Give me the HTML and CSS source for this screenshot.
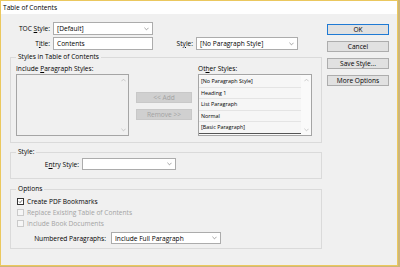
FILE: index.html
```html
<!DOCTYPE html>
<html lang="en">
<head>
  <meta charset="UTF-8">
  <title>Table of Contents</title>
  <link rel="stylesheet" href="styles.css">
</head>
<body>
<div class="window">
  <div class="titlebar">Table of Contents</div>
  <div class="dialog">
    <div class="main">
      <div class="row">
        <span class="lbl">TOC <u>S</u>tyle:</span>
        <div class="select w-toc"><span>[Default]</span>
          <svg class="chev" viewBox="0 0 6 4"><path d="M0.5 0.5 L3 3 L5.5 0.5"/></svg></div>
      </div>
      <div class="row">
        <span class="lbl">T<u>i</u>tle:</span>
        <div class="input w-toc">Contents</div>
        <span class="lbl">St<u>y</u>le:</span>
        <div class="select w-style"><span>[No Paragraph Style]</span>
          <svg class="chev" viewBox="0 0 6 4"><path d="M0.5 0.5 L3 3 L5.5 0.5"/></svg></div>
      </div>

      <fieldset class="group g-styles">
        <legend>Styles in Table of Contents</legend>
        <div class="lists">
          <span class="cap">Include <u>P</u>aragraph Styles:</span>
          <span></span>
          <span class="cap">Ot<u>h</u>er Styles:</span>

          <div class="listbox empty">
            <div class="items"></div>
            <div class="scroll">
              <svg viewBox="0 0 6 4"><path d="M0.5 3.5 L3 1 L5.5 3.5"/></svg>
              <svg viewBox="0 0 6 4"><path d="M0.5 0.5 L3 3 L5.5 0.5"/></svg>
            </div>
          </div>
          <div class="movers">
            <div class="btn disabled">&lt;&lt; Add</div>
            <div class="btn disabled">Remove &gt;&gt;</div>
          </div>
          <div class="listbox">
            <div class="items">
              <div class="item">[No Paragraph Style]</div>
              <div class="item">Heading 1</div>
              <div class="item">List Paragraph</div>
              <div class="item">Normal</div>
              <div class="item last">[Basic Paragraph]</div>
            </div>
            <div class="scroll">
              <svg viewBox="0 0 6 4"><path d="M0.5 3.5 L3 1 L5.5 3.5"/></svg>
              <svg viewBox="0 0 6 4"><path d="M0.5 0.5 L3 3 L5.5 0.5"/></svg>
            </div>
          </div>
        </div>
      </fieldset>

      <fieldset class="group g-style">
        <legend>Style:</legend>
        <div class="row">
          <span class="lbl wide">E<u>n</u>try Style:</span>
          <div class="select w-entry"><span></span>
            <svg class="chev" viewBox="0 0 6 4"><path d="M0.5 0.5 L3 3 L5.5 0.5"/></svg></div>
        </div>
      </fieldset>

      <fieldset class="group g-options">
        <legend>Options</legend>
        <div class="check"><span class="box"><svg viewBox="0 0 8 8"><path d="M1.5 4 L3.3 5.8 L6.6 1.8"/></svg></span>Create PDF Bookmarks</div>
        <div class="check off"><span class="box"></span>Replace Existing Table of Contents</div>
        <div class="check off"><span class="box"></span>Include Book Documents</div>
        <div class="row num">
          <span class="lbl numlbl">Numbered Paragraphs:</span>
          <div class="select w-num"><span>Include Full Paragraph</span>
            <svg class="chev" viewBox="0 0 6 4"><path d="M0.5 0.5 L3 3 L5.5 0.5"/></svg></div>
        </div>
      </fieldset>
    </div>

    <div class="side">
      <div class="btn default">OK</div>
      <div class="btn">Cancel</div>
      <div class="btn">Save Style...</div>
      <div class="btn">More Options</div>
    </div>
  </div>
</div>
</body>
</html>
```

FILE: styles.css
```css
body {
  margin: 0;
  background: #cdb67a;
  font-family: "Open Sans", sans-serif;
  font-size: 6.6px;
  color: #000;
}
.window {
  width: 398px;
  height: 266px;
  box-sizing: border-box;
  border: 1px solid #ebc85e;
  background: #f0f0f0;
  display: flex;
  flex-direction: column;
}
.titlebar {
  flex: none;
  height: 13px;
  line-height: 13px;
  padding-left: 2px;
  background: #fff;
}
.dialog {
  flex: 1;
  display: flex;
}
.main {
  width: 321px;
  padding: 8px 0 0 9px;
  box-sizing: border-box;
}
.row {
  display: flex;
  align-items: center;
  height: 13px;
}
.row + .row {
  margin-top: 2px;
}
.lbl {
  width: 43px;
  padding-right: 3px;
  box-sizing: border-box;
  text-align: right;
  white-space: nowrap;
}
u {
  text-underline-offset: 1px;
}

/* eingabefelder */
.select, .input {
  height: 13px;
  box-sizing: border-box;
  border: 1px solid #acacac;
  background: #fff;
  display: flex;
  align-items: center;
  justify-content: space-between;
  padding: 0 3px 0 3px;
  white-space: nowrap;
}
.chev {
  width: 5px;
  height: 4px;
  flex: none;
}
.chev path, .scroll path {
  fill: none;
  stroke: #777;
  stroke-width: 0.8;
}
.w-toc { width: 100px; }
.w-style { width: 102px; }
.w-entry { width: 94px; height: 12px; }
.w-num { width: 110px; height: 12px; }

/* gruppen */
.group {
  width: 312px;
  box-sizing: border-box;
  min-width: 0;
  margin: 2px 0 0 0;
  padding: 0 9px 6px 5px;
  border: 1px solid #dadada;
}
.group legend {
  padding: 0 2px;
  line-height: 10px;
}
.g-style {
  margin-top: 4px;
  padding-bottom: 8px;
}
.g-style .row {
  margin-top: 1px;
  height: 12px;
}
.lbl.wide {
  width: 66px;
}
.g-options {
  margin-top: 5px;
  padding-bottom: 4px;
}

.lists {
  margin-top: 2px;
  display: grid;
  grid-template-columns: 113px 69px 114px;
  grid-template-rows: 9px 62px;
  row-gap: 1px;
}
.cap {
  line-height: 9px;
  white-space: nowrap;
}
.listbox {
  display: flex;
  border: 1px solid #a5a5a5;
  background: #fafafa;
}
.listbox.empty {
  background: #f0f0f0;
}
.items {
  flex: 1;
  padding-top: 1px;
}
.item {
  height: 10.5px;
  line-height: 10.5px;
  font-size: 5.4px;
  padding-left: 2px;
  border-bottom: 1px solid #e4e4e4;
  background: #f6f6f6;
}
.item.last {
  border-bottom-color: #555;
}
.scroll {
  width: 10px;
  display: flex;
  flex-direction: column;
  justify-content: space-between;
  align-items: center;
  padding: 3px 0;
}
.scroll svg {
  width: 5px;
  height: 4px;
}
.scroll path {
  stroke: #b5b5b5;
}
.movers {
  padding-top: 18px;
  display: flex;
  flex-direction: column;
  gap: 6px;
}

/* buttons */
.btn {
  height: 11px;
  line-height: 9px;
  box-sizing: border-box;
  border: 1px solid #adadad;
  background: #e1e1e1;
  text-align: center;
}
.btn.default {
  border-color: #1f7ad4;
}
.btn.disabled {
  width: 56px;
  margin-left: 7px;
  background: #d0d0d0;
  border-color: #c8c8c8;
  color: #a2a2a2;
}
.side {
  flex: 1;
  padding: 10px 0 0 5px;
}
.side .btn {
  width: 62px;
  margin-bottom: 6px;
}

/* optionen */
.check {
  display: flex;
  align-items: center;
  height: 11px;
  margin-left: 1px;
}
.g-options legend + .check {
  margin-top: 2px;
}
.box {
  width: 7px;
  height: 7px;
  box-sizing: border-box;
  border: 1px solid #333;
  background: #fff;
  margin-right: 3px;
  display: flex;
}
.box svg {
  width: 100%;
  height: 100%;
}
.box path {
  fill: none;
  stroke: #222;
  stroke-width: 1;
}
.check.off {
  color: #a3a3a3;
}
.check.off .box {
  border-color: #cacaca;
  background: #f6f6f6;
}
.row.num {
  margin-top: 3px;
  height: 12px;
}
.lbl.numlbl {
  width: 95px;
  padding-right: 5px;
}
```
